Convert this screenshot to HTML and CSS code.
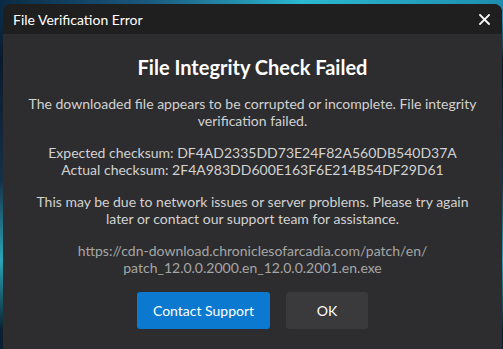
FILE: index.html
```html
<!DOCTYPE html>
<html>
<head>
<meta charset="utf-8">
<link rel="stylesheet" href="styles.css">
</head>
<body>
<div class="backdrop">
  <div class="dialog">
    <div class="titlebar">
      <span class="title">File Verification Error</span>
      <svg class="close" width="11" height="11" viewBox="0 0 11 11"><path d="M1 1L10 10M10 1L1 10" stroke="#fff" stroke-width="1.8" stroke-linecap="square"/></svg>
    </div>
    <div class="content">
      <h1 class="heading">File Integrity Check Failed</h1>
      <p class="para">The downloaded file appears to be corrupted or incomplete. File integrity verification failed.</p>
      <p class="para">Expected checksum: DF4AD2335DD73E24F82A560DB540D37A<br>Actual checksum: 2F4A983DD600E163F6E214B54DF29D61</p>
      <p class="para">This may be due to network issues or server problems. Please try again later or contact our support team for assistance.</p>
      <p class="para url">https://cdn-download.chroniclesofarcadia.com/patch/en/<br>patch_12.0.0.2000.en_12.0.0.2001.en.exe</p>
      <div class="actions">
        <button class="btn primary">Contact Support</button>
        <button class="btn secondary">OK</button>
      </div>
    </div>
  </div>
</div>
</body>
</html>
```
FILE: styles.css
```css
html, body {
  margin: 0;
  padding: 0;
  width: 503px;
  height: 349px;
  overflow: hidden;
}
body {
  font-family: Lato, "Open Sans", sans-serif;
}
.backdrop {
  width: 503px;
  height: 349px;
  box-sizing: border-box;
  padding: 4px 1px 0 3px;
  background:
    linear-gradient(180deg, transparent 0, transparent 20px, #0c1a2a 60px, #163048 180px, #2aa6b8 260px, #0a2030 330px),
    linear-gradient(90deg, #0a2a44 0, #1a5a80 30%, #2bb8d0 60%, #1d8db0 100%);
}
.dialog {
  height: 350px;
  background: #2d2d2f;
  border-radius: 8px;
  overflow: hidden;
  display: flex;
  flex-direction: column;
}
.titlebar {
  height: 30px;
  background: #1f1f1f;
  display: flex;
  align-items: center;
  justify-content: space-between;
  padding: 0 12px 0 10px;
  flex-shrink: 0;
}
.title {
  color: #ffffff;
  font-size: 14px;
  padding-top: 1px;
}
.close {
  display: block;
}
.content {
  padding: 20px 18px 0;
  text-align: center;
  color: #d2d2d2;
}
.heading {
  margin: 0;
  font-size: 20px;
  line-height: 26px;
  font-weight: 700;
  color: #ffffff;
}
.para {
  margin: 15px 0 0;
  font-size: 14px;
  line-height: 17px;
}
.url {
  color: #a6a6a6;
}
.actions {
  display: flex;
  justify-content: center;
  gap: 16px;
  margin-top: 16px;
}
.btn {
  font-family: Lato, "Open Sans", sans-serif;
  font-size: 14px;
  height: 37px;
  border: none;
  border-radius: 3px;
  color: #ffffff;
}
.primary {
  width: 133px;
  background: #0a79cf;
}
.secondary {
  width: 82px;
  background: #3a3a3c;
}
```
